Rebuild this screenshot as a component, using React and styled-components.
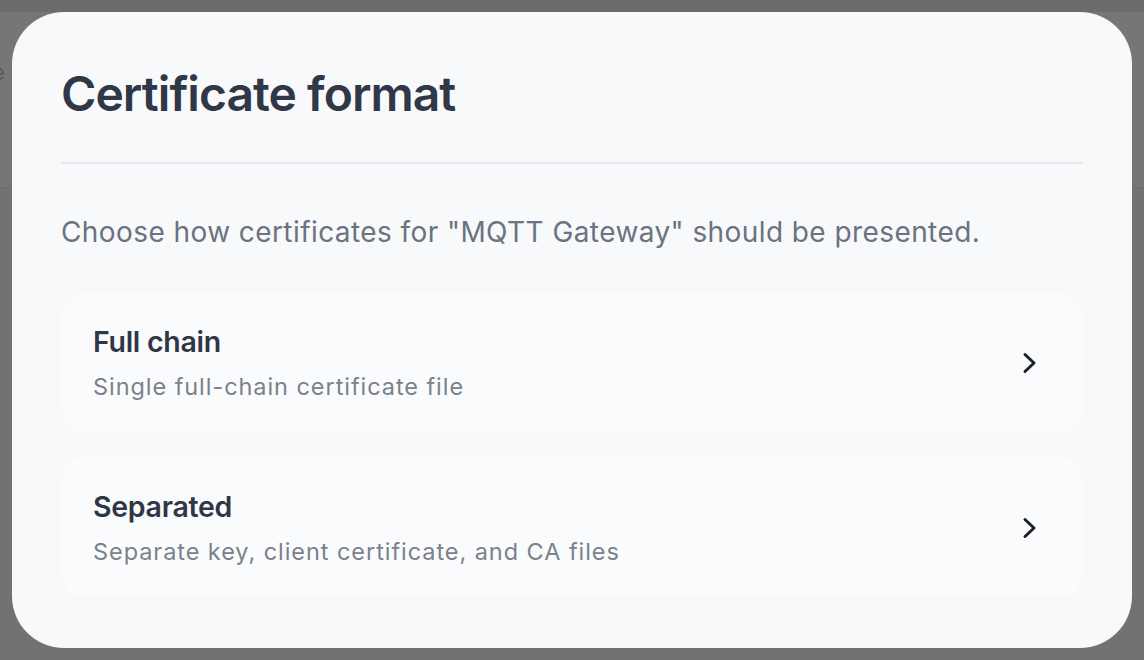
import React from "react";
import styled, { createGlobalStyle } from "styled-components";

const Global = createGlobalStyle`
  html, body { margin: 0; padding: 0; }
  body {
    width: 1144px;
    height: 660px;
    overflow: hidden;
    font-family: Inter, "Noto Sans", sans-serif;
    background: #727272;
  }
`;

const Page = styled.div`
  position: relative;
  width: 1144px;
  height: 660px;
  display: flex;
  flex-direction: column;
  background: #727272;
`;

const TopStrip = styled.div`
  height: 12px;
  background: #6b6b6b;
`;

const Header = styled.div`
  height: 176px;
  background: #767676;
  border-bottom: 1px solid #6c6c6c;
  display: flex;
  align-items: center;
  box-sizing: border-box;
  color: #5a5a5a;
  font-size: 22px;
  overflow: hidden;
`;

const HeaderText = styled.span`
  margin-left: -8px;
  margin-top: -56px;
`;

const Overlay = styled.div`
  position: absolute;
  inset: 0;
  display: flex;
  padding: 12px;
  box-sizing: border-box;
`;

const Modal = styled.div`
  flex: 1;
  background: #f8f9fb;
  border-radius: 52px;
  padding: 0 49px;
  display: flex;
  flex-direction: column;
`;

const Title = styled.h1`
  margin: 0;
  padding: 55px 0 41px;
  font-size: 48px;
  line-height: 54px;
  font-weight: 570;
  letter-spacing: -0.02em;
  color: #303848;
  border-bottom: 2px solid #e6e8ec;
`;

const Description = styled.p`
  margin: 50px 0 42px;
  font-size: 28px;
  line-height: 36px;
  letter-spacing: 0.015em;
  color: #6b7280;
`;

const List = styled.div`
  display: flex;
  flex-direction: column;
  gap: 24px;
`;

const Card = styled.button`
  all: unset;
  box-sizing: border-box;
  height: 141px;
  display: flex;
  align-items: center;
  justify-content: space-between;
  padding: 0 42px 0 32px;
  background: #fafbfc;
  border-radius: 24px;
  box-shadow: 0 1px 3px rgba(0, 0, 0, 0.015);
  cursor: pointer;
`;

const CardText = styled.div`
  display: flex;
  flex-direction: column;
  gap: 12px;
  margin-top: 1px;
`;

const CardTitle = styled.div`
  font-size: 28.5px;
  line-height: 36px;
  font-weight: 570;
  color: #2f3645;
  letter-spacing: -0.01em;
`;

const CardSub = styled.div`
  font-size: 23.5px;
  line-height: 30px;
  color: #7b818c;
  letter-spacing: 0.04em;
`;

const Chevron = () => (
  <svg width="24" height="24" viewBox="0 0 24 24" fill="none" stroke="#1c1f26" strokeWidth="3" strokeLinecap="round" strokeLinejoin="round">
    <path d="M8 3.5L17 12L8 20.5" />
  </svg>
);

const options = [
  { title: "Full chain", sub: "Single full-chain certificate file" },
  { title: "Separated", sub: "Separate key, client certificate, and CA files" },
];

export default function App() {
  return (
    <>
      <Global />
      <Page>
        <TopStrip />
        <Header>
          <HeaderText>e</HeaderText>
        </Header>
        <Overlay>
          <Modal>
            <Title>Certificate format</Title>
            <Description>
              Choose how certificates for "MQTT Gateway" should be presented.
            </Description>
            <List>
              {options.map((o) => (
                <Card key={o.title}>
                  <CardText>
                    <CardTitle>{o.title}</CardTitle>
                    <CardSub>{o.sub}</CardSub>
                  </CardText>
                  <Chevron />
                </Card>
              ))}
            </List>
          </Modal>
        </Overlay>
      </Page>
    </>
  );
}
